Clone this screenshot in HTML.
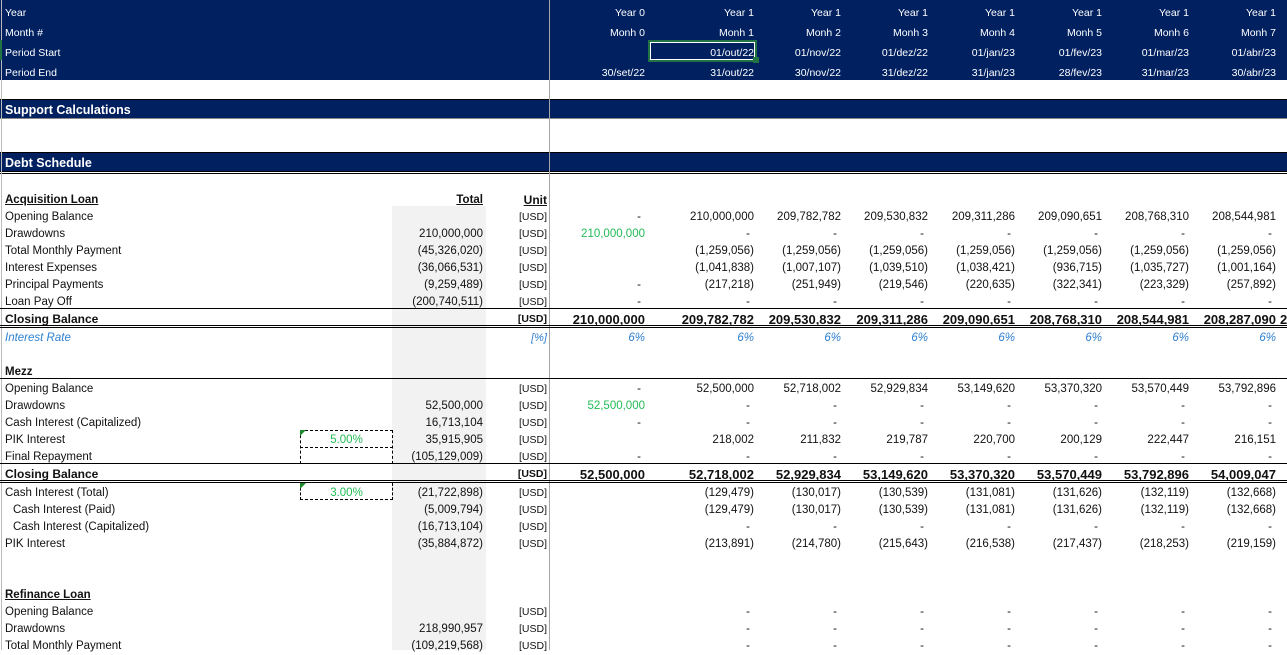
<!DOCTYPE html>
<html><head><meta charset="utf-8"><style>
*{margin:0;padding:0;box-sizing:border-box}
body{width:1287px;height:650px;overflow:hidden;background:#fff;font-family:"Liberation Sans",sans-serif;font-size:11.5px;color:#111;position:relative}
.a{position:absolute}
.nav{position:absolute;left:0;width:1287px;background:#002060}
.r{position:absolute;left:0;width:1287px;height:17px;line-height:17px;white-space:nowrap;margin-top:2px}
.r span{position:absolute;top:0;text-align:right;white-space:nowrap}
.l{left:5px!important;text-align:left!important}
.t{left:380px;width:103px}
.u{left:486px;width:61px;font-size:10.5px}
.c0{left:530px;width:115px}.c1{left:640px;width:114px}.c2{left:727px;width:114px}.c3{left:814px;width:114px}
.c4{left:901px;width:114px}.c5{left:988px;width:114px}.c6{left:1075px;width:114px}.c7{left:1162px;width:114px}
.d{padding-right:4px}
.b{font-weight:bold;font-size:13px}
.g{color:#22bb55}
.h{color:#fff;font-size:10.5px}
.i{color:#2f80d0;font-style:italic}
.hl{position:absolute;left:0;width:1287px;height:0}
</style></head><body>
<div class="nav" style="top:0;height:80px"></div>
<div class="nav" style="top:99px;height:19px;border-top:1px solid #000"></div>
<div class="nav" style="top:152px;height:19px;border-top:1px solid #000"></div>
<div class="hl" style="top:118px;border-top:1px solid #888"></div>
<div class="hl" style="top:171px;border-top:1px solid #000"></div>
<div class="hl" style="top:173px;border-top:1px solid #000"></div>
<div class="a" style="left:392px;top:206px;width:94px;height:444px;background:#f2f2f2"></div>
<div class="a" style="left:549px;top:0;width:1px;height:650px;background:#a6a6a6"></div>
<div class="a" style="left:1px;top:0;width:1px;height:650px;background:#bbb"></div>
<div class="a" style="left:0;top:40px;width:2px;height:20px;background:#217346"></div>

<div class="r h" style="top:3px"><span class="l">Year</span><span class="c0">Year 0</span><span class="c1">Year 1</span><span class="c2">Year 1</span><span class="c3">Year 1</span><span class="c4">Year 1</span><span class="c5">Year 1</span><span class="c6">Year 1</span><span class="c7">Year 1</span></div>
<div class="r h" style="top:23px"><span class="l">Month #</span><span class="c0">Monh 0</span><span class="c1">Monh 1</span><span class="c2">Monh 2</span><span class="c3">Monh 3</span><span class="c4">Monh 4</span><span class="c5">Monh 5</span><span class="c6">Monh 6</span><span class="c7">Monh 7</span></div>
<div class="a" style="left:648px;top:40px;width:109px;height:22px;border:2px solid #217346;box-shadow:inset 0 0 0 1px #fff"></div>
<div class="a" style="left:753px;top:57px;width:6px;height:6px;background:#217346"></div>
<div class="r h" style="top:43px"><span class="l">Period Start</span><span class="c1">01/out/22</span><span class="c2">01/nov/22</span><span class="c3">01/dez/22</span><span class="c4">01/jan/23</span><span class="c5">01/fev/23</span><span class="c6">01/mar/23</span><span class="c7">01/abr/23</span></div>
<div class="r h" style="top:63px"><span class="l">Period End</span><span class="c0">30/set/22</span><span class="c1">31/out/22</span><span class="c2">30/nov/22</span><span class="c3">31/dez/22</span><span class="c4">31/jan/23</span><span class="c5">28/fev/23</span><span class="c6">31/mar/23</span><span class="c7">30/abr/23</span></div>

<div class="r" style="top:100px;color:#fff;font-weight:bold;font-size:12.5px"><span class="l">Support Calculations</span></div>
<div class="r" style="top:153px;color:#fff;font-weight:bold;font-size:12.5px"><span class="l">Debt Schedule</span></div>

<div class="r" style="top:190px;font-weight:bold"><span class="l" style="text-decoration:underline">Acquisition Loan</span><span class="t" style="text-decoration:underline">Total</span><span class="u" style="font-size:12px;text-decoration:underline">Unit</span></div>
<div class="r" style="top:207px"><span class="l">Opening Balance</span><span class="u">[USD]</span><span class="c0 d">-</span><span class="c1">210,000,000</span><span class="c2">209,782,782</span><span class="c3">209,530,832</span><span class="c4">209,311,286</span><span class="c5">209,090,651</span><span class="c6">208,768,310</span><span class="c7">208,544,981</span></div>
<div class="r" style="top:224px"><span class="l">Drawdowns</span><span class="t">210,000,000</span><span class="u">[USD]</span><span class="c0 g">210,000,000</span><span class="c1 d">-</span><span class="c2 d">-</span><span class="c3 d">-</span><span class="c4 d">-</span><span class="c5 d">-</span><span class="c6 d">-</span><span class="c7 d">-</span></div>
<div class="r" style="top:241px"><span class="l">Total Monthly Payment</span><span class="t">(45,326,020)</span><span class="u">[USD]</span><span class="c1">(1,259,056)</span><span class="c2">(1,259,056)</span><span class="c3">(1,259,056)</span><span class="c4">(1,259,056)</span><span class="c5">(1,259,056)</span><span class="c6">(1,259,056)</span><span class="c7">(1,259,056)</span></div>
<div class="r" style="top:258px"><span class="l">Interest Expenses</span><span class="t">(36,066,531)</span><span class="u">[USD]</span><span class="c1">(1,041,838)</span><span class="c2">(1,007,107)</span><span class="c3">(1,039,510)</span><span class="c4">(1,038,421)</span><span class="c5">(936,715)</span><span class="c6">(1,035,727)</span><span class="c7">(1,001,164)</span></div>
<div class="r" style="top:275px"><span class="l">Principal Payments</span><span class="t">(9,259,489)</span><span class="u">[USD]</span><span class="c0 d">-</span><span class="c1">(217,218)</span><span class="c2">(251,949)</span><span class="c3">(219,546)</span><span class="c4">(220,635)</span><span class="c5">(322,341)</span><span class="c6">(223,329)</span><span class="c7">(257,892)</span></div>
<div class="r" style="top:292px"><span class="l">Loan Pay Off</span><span class="t">(200,740,511)</span><span class="u">[USD]</span><span class="c0 d">-</span><span class="c1 d">-</span><span class="c2 d">-</span><span class="c3 d">-</span><span class="c4 d">-</span><span class="c5 d">-</span><span class="c6 d">-</span><span class="c7 d">-</span></div>
<div class="hl" style="top:308px;border-top:1px solid #000"></div>
<div class="r b" style="top:309px"><span class="l" style="font-size:12px">Closing Balance</span><span class="u" style="font-weight:bold">[USD]</span><span class="c0">210,000,000</span><span class="c1">209,782,782</span><span class="c2">209,530,832</span><span class="c3">209,311,286</span><span class="c4">209,090,651</span><span class="c5">208,768,310</span><span class="c6">208,544,981</span><span class="c7">208,287,090</span><span style="left:1280px">2</span></div>
<div class="hl" style="top:325px;border-top:1px solid #000"></div>
<div class="hl" style="top:327px;border-top:1px solid #000"></div>
<div class="r i" style="top:328px"><span class="l">Interest Rate</span><span class="u" style="font-size:11px">[%]</span><span class="c0">6%</span><span class="c1">6%</span><span class="c2">6%</span><span class="c3">6%</span><span class="c4">6%</span><span class="c5">6%</span><span class="c6">6%</span><span class="c7">6%</span></div>

<div class="r" style="top:362px;font-weight:bold"><span class="l">Mezz</span></div>
<div class="hl" style="top:378px;border-top:1px solid #000"></div>
<div class="r" style="top:379px"><span class="l">Opening Balance</span><span class="u">[USD]</span><span class="c0 d">-</span><span class="c1">52,500,000</span><span class="c2">52,718,002</span><span class="c3">52,929,834</span><span class="c4">53,149,620</span><span class="c5">53,370,320</span><span class="c6">53,570,449</span><span class="c7">53,792,896</span></div>
<div class="r" style="top:396px"><span class="l">Drawdowns</span><span class="t">52,500,000</span><span class="u">[USD]</span><span class="c0 g">52,500,000</span><span class="c1 d">-</span><span class="c2 d">-</span><span class="c3 d">-</span><span class="c4 d">-</span><span class="c5 d">-</span><span class="c6 d">-</span><span class="c7 d">-</span></div>
<div class="r" style="top:413px"><span class="l">Cash Interest (Capitalized)</span><span class="t">16,713,104</span><span class="u">[USD]</span><span class="c0 d">-</span><span class="c1 d">-</span><span class="c2 d">-</span><span class="c3 d">-</span><span class="c4 d">-</span><span class="c5 d">-</span><span class="c6 d">-</span><span class="c7 d">-</span></div>
<div class="a" style="left:300px;top:430px;width:93px;height:34px;border:1px dashed #000;border-bottom:none"></div>
<div class="a" style="left:300px;top:447px;width:93px;height:0;border-top:1px dashed #000"></div>
<div class="a" style="left:300px;top:430px;width:0;height:0;border-top:6px solid #1a8a2a;border-right:6px solid transparent"></div>
<div class="r" style="top:430px"><span class="l">PIK Interest</span><span class="g" style="left:300px;width:93px;text-align:center">5.00%</span><span class="t">35,915,905</span><span class="u">[USD]</span><span class="c1">218,002</span><span class="c2">211,832</span><span class="c3">219,787</span><span class="c4">220,700</span><span class="c5">200,129</span><span class="c6">222,447</span><span class="c7">216,151</span></div>
<div class="r" style="top:447px"><span class="l">Final Repayment</span><span class="t">(105,129,009)</span><span class="u">[USD]</span><span class="c0 d">-</span><span class="c1 d">-</span><span class="c2 d">-</span><span class="c3 d">-</span><span class="c4 d">-</span><span class="c5 d">-</span><span class="c6 d">-</span><span class="c7 d">-</span></div>
<div class="hl" style="top:463px;border-top:1px solid #000"></div>
<div class="r b" style="top:464px"><span class="l" style="font-size:12px">Closing Balance</span><span class="u" style="font-weight:bold">[USD]</span><span class="c0">52,500,000</span><span class="c1">52,718,002</span><span class="c2">52,929,834</span><span class="c3">53,149,620</span><span class="c4">53,370,320</span><span class="c5">53,570,449</span><span class="c6">53,792,896</span><span class="c7">54,009,047</span></div>
<div class="hl" style="top:480px;border-top:1px solid #000"></div>
<div class="hl" style="top:482px;border-top:1px solid #000"></div>
<div class="a" style="left:300px;top:483px;width:93px;height:17px;border:1px dashed #000;border-top:none"></div>
<div class="a" style="left:300px;top:483px;width:0;height:0;border-top:6px solid #1a8a2a;border-right:6px solid transparent"></div>
<div class="r" style="top:483px"><span class="l">Cash Interest (Total)</span><span class="g" style="left:300px;width:93px;text-align:center">3.00%</span><span class="t">(21,722,898)</span><span class="u">[USD]</span><span class="c1">(129,479)</span><span class="c2">(130,017)</span><span class="c3">(130,539)</span><span class="c4">(131,081)</span><span class="c5">(131,626)</span><span class="c6">(132,119)</span><span class="c7">(132,668)</span></div>
<div class="r" style="top:500px"><span class="l" style="left:13px!important">Cash Interest (Paid)</span><span class="t">(5,009,794)</span><span class="u">[USD]</span><span class="c1">(129,479)</span><span class="c2">(130,017)</span><span class="c3">(130,539)</span><span class="c4">(131,081)</span><span class="c5">(131,626)</span><span class="c6">(132,119)</span><span class="c7">(132,668)</span></div>
<div class="r" style="top:517px"><span class="l" style="left:13px!important">Cash Interest (Capitalized)</span><span class="t">(16,713,104)</span><span class="u">[USD]</span><span class="c1 d">-</span><span class="c2 d">-</span><span class="c3 d">-</span><span class="c4 d">-</span><span class="c5 d">-</span><span class="c6 d">-</span><span class="c7 d">-</span></div>
<div class="r" style="top:534px"><span class="l">PIK Interest</span><span class="t">(35,884,872)</span><span class="u">[USD]</span><span class="c1">(213,891)</span><span class="c2">(214,780)</span><span class="c3">(215,643)</span><span class="c4">(216,538)</span><span class="c5">(217,437)</span><span class="c6">(218,253)</span><span class="c7">(219,159)</span></div>

<div class="r" style="top:585px;font-weight:bold"><span class="l" style="text-decoration:underline">Refinance Loan</span></div>
<div class="r" style="top:602px"><span class="l">Opening Balance</span><span class="u">[USD]</span><span class="c1 d">-</span><span class="c2 d">-</span><span class="c3 d">-</span><span class="c4 d">-</span><span class="c5 d">-</span><span class="c6 d">-</span><span class="c7 d">-</span></div>
<div class="r" style="top:619px"><span class="l">Drawdowns</span><span class="t">218,990,957</span><span class="u">[USD]</span><span class="c1 d">-</span><span class="c2 d">-</span><span class="c3 d">-</span><span class="c4 d">-</span><span class="c5 d">-</span><span class="c6 d">-</span><span class="c7 d">-</span></div>
<div class="r" style="top:636px"><span class="l">Total Monthly Payment</span><span class="t">(109,219,568)</span><span class="u">[USD]</span><span class="c1 d">-</span><span class="c2 d">-</span><span class="c3 d">-</span><span class="c4 d">-</span><span class="c5 d">-</span><span class="c6 d">-</span><span class="c7 d">-</span></div>
</body></html>
